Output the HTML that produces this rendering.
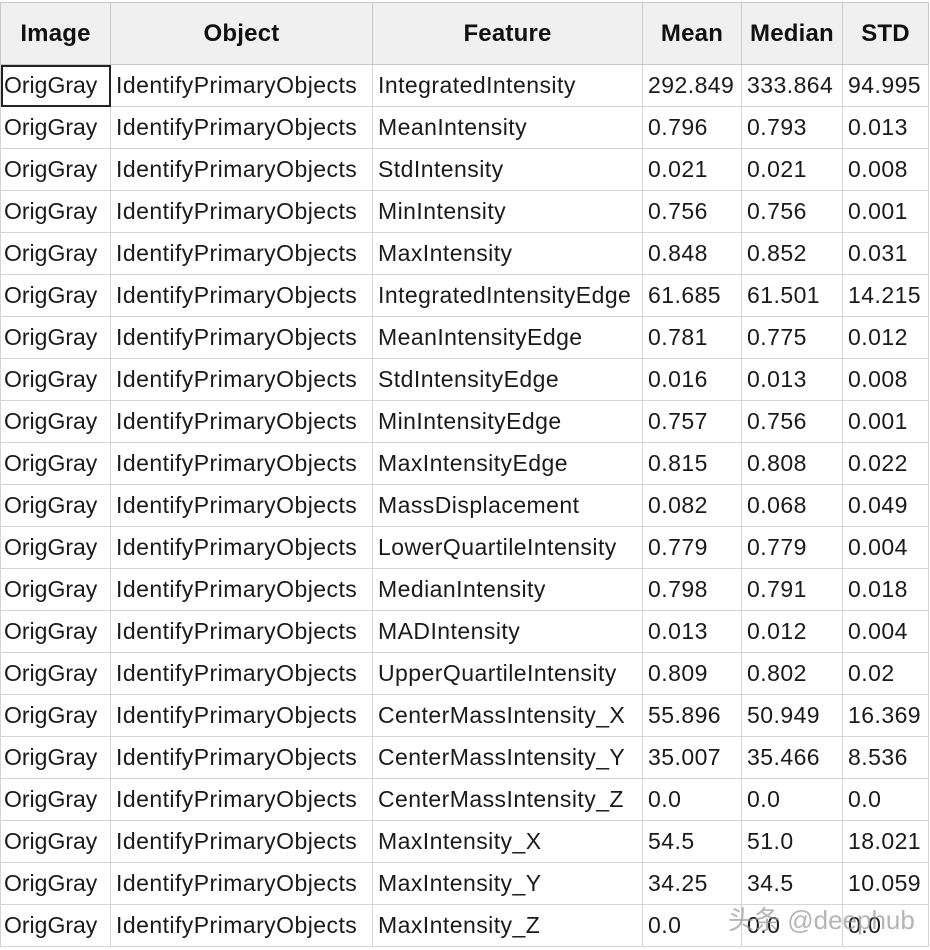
<!DOCTYPE html>
<html><head><meta charset="utf-8"><style>
html,body{margin:0;padding:0;background:#fff;width:930px;height:950px;overflow:hidden}
table{position:absolute;left:0;top:2px;border-collapse:collapse;table-layout:fixed;font-family:"Liberation Sans",sans-serif;font-size:23px;color:#1a1a1a}
td,th{border:1px solid #d4d4d4;height:41px;padding:0 0 0 5px;white-space:nowrap;overflow:hidden;text-align:left;letter-spacing:0.45px}
td:first-child{padding-left:3px;letter-spacing:0px}
th{height:61px;background:#f0f0f0;font-weight:bold;font-size:24px;text-align:center;padding:0;color:#111;border-color:#c8c8c8;letter-spacing:0.2px}
th:first-child{padding:0;letter-spacing:0.2px}
tr.f td:first-child{outline:2px solid #222;outline-offset:-2px}
.wm{position:absolute;left:728px;top:900px;font-family:"Liberation Sans","Noto Sans CJK SC",sans-serif;font-size:26px;color:rgba(150,150,150,0.7)}
</style></head><body>
<table>
<colgroup><col style="width:110px"><col style="width:262px"><col style="width:270px"><col style="width:99px"><col style="width:101px"><col style="width:86px"></colgroup>
<tr><th>Image</th><th>Object</th><th>Feature</th><th>Mean</th><th>Median</th><th>STD</th></tr>
<tr class="f"><td>OrigGray</td><td>IdentifyPrimaryObjects</td><td>IntegratedIntensity</td><td>292.849</td><td>333.864</td><td>94.995</td></tr>
<tr><td>OrigGray</td><td>IdentifyPrimaryObjects</td><td>MeanIntensity</td><td>0.796</td><td>0.793</td><td>0.013</td></tr>
<tr><td>OrigGray</td><td>IdentifyPrimaryObjects</td><td>StdIntensity</td><td>0.021</td><td>0.021</td><td>0.008</td></tr>
<tr><td>OrigGray</td><td>IdentifyPrimaryObjects</td><td>MinIntensity</td><td>0.756</td><td>0.756</td><td>0.001</td></tr>
<tr><td>OrigGray</td><td>IdentifyPrimaryObjects</td><td>MaxIntensity</td><td>0.848</td><td>0.852</td><td>0.031</td></tr>
<tr><td>OrigGray</td><td>IdentifyPrimaryObjects</td><td>IntegratedIntensityEdge</td><td>61.685</td><td>61.501</td><td>14.215</td></tr>
<tr><td>OrigGray</td><td>IdentifyPrimaryObjects</td><td>MeanIntensityEdge</td><td>0.781</td><td>0.775</td><td>0.012</td></tr>
<tr><td>OrigGray</td><td>IdentifyPrimaryObjects</td><td>StdIntensityEdge</td><td>0.016</td><td>0.013</td><td>0.008</td></tr>
<tr><td>OrigGray</td><td>IdentifyPrimaryObjects</td><td>MinIntensityEdge</td><td>0.757</td><td>0.756</td><td>0.001</td></tr>
<tr><td>OrigGray</td><td>IdentifyPrimaryObjects</td><td>MaxIntensityEdge</td><td>0.815</td><td>0.808</td><td>0.022</td></tr>
<tr><td>OrigGray</td><td>IdentifyPrimaryObjects</td><td>MassDisplacement</td><td>0.082</td><td>0.068</td><td>0.049</td></tr>
<tr><td>OrigGray</td><td>IdentifyPrimaryObjects</td><td>LowerQuartileIntensity</td><td>0.779</td><td>0.779</td><td>0.004</td></tr>
<tr><td>OrigGray</td><td>IdentifyPrimaryObjects</td><td>MedianIntensity</td><td>0.798</td><td>0.791</td><td>0.018</td></tr>
<tr><td>OrigGray</td><td>IdentifyPrimaryObjects</td><td>MADIntensity</td><td>0.013</td><td>0.012</td><td>0.004</td></tr>
<tr><td>OrigGray</td><td>IdentifyPrimaryObjects</td><td>UpperQuartileIntensity</td><td>0.809</td><td>0.802</td><td>0.02</td></tr>
<tr><td>OrigGray</td><td>IdentifyPrimaryObjects</td><td>CenterMassIntensity_X</td><td>55.896</td><td>50.949</td><td>16.369</td></tr>
<tr><td>OrigGray</td><td>IdentifyPrimaryObjects</td><td>CenterMassIntensity_Y</td><td>35.007</td><td>35.466</td><td>8.536</td></tr>
<tr><td>OrigGray</td><td>IdentifyPrimaryObjects</td><td>CenterMassIntensity_Z</td><td>0.0</td><td>0.0</td><td>0.0</td></tr>
<tr><td>OrigGray</td><td>IdentifyPrimaryObjects</td><td>MaxIntensity_X</td><td>54.5</td><td>51.0</td><td>18.021</td></tr>
<tr><td>OrigGray</td><td>IdentifyPrimaryObjects</td><td>MaxIntensity_Y</td><td>34.25</td><td>34.5</td><td>10.059</td></tr>
<tr><td>OrigGray</td><td>IdentifyPrimaryObjects</td><td>MaxIntensity_Z</td><td>0.0</td><td>0.0</td><td>0.0</td></tr>
</table>
<div class="wm">头条 @deephub</div>
</body></html>
